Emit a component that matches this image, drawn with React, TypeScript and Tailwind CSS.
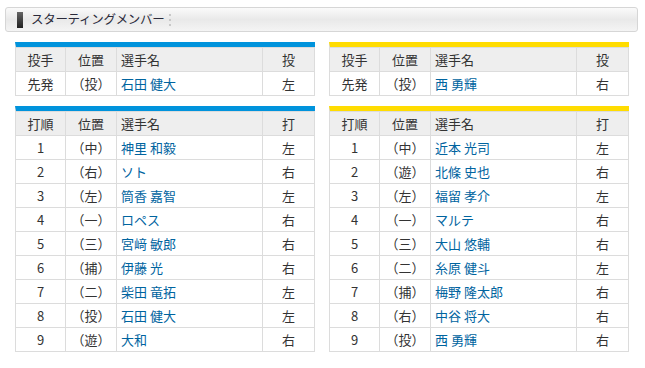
import React from "react";

type Row = [string, string, string, string];

const blue = "#0093dc";
const yellow = "#ffdc00";

function Table({ color, head, rows }: { color: "blue" | "yellow"; head: Row; rows: Row[] }) {
  return (
    <div
      className={
        "w-[300px] border-l border-[#dcdcdc] border-t-[5px] " +
        (color === "blue" ? "border-t-[#0093dc]" : "border-t-[#ffdc00]")
      }
    >
      <div className="grid grid-cols-[50px_51px_146px_52px] h-[25px] border-t border-b border-[#dcdcdc] bg-[#eeeeee]">
        <div className="border-r border-[#dcdcdc] flex items-center justify-center">{head[0]}</div>
        <div className="border-r border-[#dcdcdc] flex items-center justify-center">{head[1]}</div>
        <div className="border-r border-[#dcdcdc] flex items-center pl-[4px]">{head[2]}</div>
        <div className="border-r border-[#dcdcdc] flex items-center justify-center">{head[3]}</div>
      </div>
      {rows.map((r, i) => (
        <div key={i} className="grid grid-cols-[50px_51px_146px_52px] h-[24px] border-b border-[#dcdcdc] bg-white">
          <div className="border-r border-[#dcdcdc] flex items-center justify-center">{r[0]}</div>
          <div className="border-r border-[#dcdcdc] flex items-center justify-center">{r[1]}</div>
          <div className="border-r border-[#dcdcdc] flex items-center pl-[4px] text-[#00649f]">{r[2]}</div>
          <div className="border-r border-[#dcdcdc] flex items-center justify-center">{r[3]}</div>
        </div>
      ))}
    </div>
  );
}

export default function App() {
  const leftBat: Row[] = [
    ["1", "（中）", "神里 和毅", "左"],
    ["2", "（右）", "ソト", "右"],
    ["3", "（左）", "筒香 嘉智", "左"],
    ["4", "（一）", "ロペス", "右"],
    ["5", "（三）", "宮﨑 敏郎", "右"],
    ["6", "（捕）", "伊藤 光", "右"],
    ["7", "（二）", "柴田 竜拓", "左"],
    ["8", "（投）", "石田 健大", "左"],
    ["9", "（遊）", "大和", "右"],
  ];
  const rightBat: Row[] = [
    ["1", "（中）", "近本 光司", "左"],
    ["2", "（遊）", "北條 史也", "右"],
    ["3", "（左）", "福留 孝介", "左"],
    ["4", "（一）", "マルテ", "右"],
    ["5", "（三）", "大山 悠輔", "右"],
    ["6", "（二）", "糸原 健斗", "左"],
    ["7", "（捕）", "梅野 隆太郎", "右"],
    ["8", "（右）", "中谷 将大", "右"],
    ["9", "（投）", "西 勇輝", "右"],
  ];
  return (
    <div
      className="w-[645px] h-[368px] bg-white text-[13px] text-[#333333] pt-[7px]"
      style={{ fontFamily: '"Noto Sans CJK JP", "Noto Sans", sans-serif' }}
    >
      <div className="ml-[5px] w-[633px] h-[25px] border border-[#d6d6d6] rounded-[3px] bg-gradient-to-b from-[#fafafa] via-[#e9e9e9] to-[#f4f4f4] flex items-center">
        <div className="ml-[11px] w-[6px] h-[16px] bg-gradient-to-b from-[#666666] to-[#222222]" />
        <div className="ml-[8px] text-[12.5px] leading-none text-[#2a2a3a] tracking-[-0.3px]">スターティングメンバー</div>
        <div className="ml-[5px] flex flex-col gap-[3px]">
          <div className="w-[2px] h-[2px] bg-[#c8c8c8]" />
          <div className="w-[2px] h-[2px] bg-[#c8c8c8]" />
          <div className="w-[2px] h-[2px] bg-[#c8c8c8]" />
        </div>
      </div>
      <div className="flex gap-[14px] pl-[15px] mt-[10px]">
        <div className="flex flex-col gap-[10px]">
          <Table color="blue" head={["投手", "位置", "選手名", "投"]} rows={[["先発", "（投）", "石田 健大", "左"]]} />
          <Table color="blue" head={["打順", "位置", "選手名", "打"]} rows={leftBat} />
        </div>
        <div className="flex flex-col gap-[10px]">
          <Table color="yellow" head={["投手", "位置", "選手名", "投"]} rows={[["先発", "（投）", "西 勇輝", "右"]]} />
          <Table color="yellow" head={["打順", "位置", "選手名", "打"]} rows={rightBat} />
        </div>
      </div>
    </div>
  );
}
